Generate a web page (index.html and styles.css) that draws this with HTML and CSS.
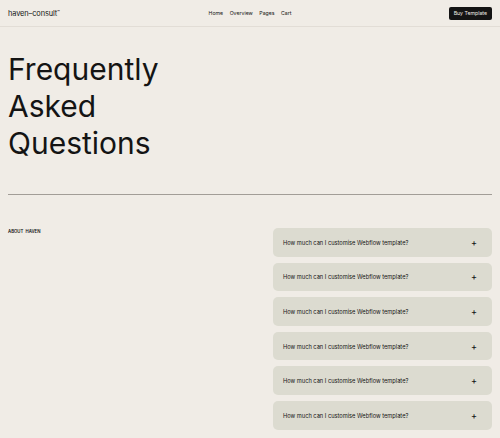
FILE: index.html
```html
<!DOCTYPE html>
<html>
<head>
<meta charset="utf-8">
<link rel="stylesheet" href="styles.css">
</head>
<body>
<header class="nav">
  <div class="logo">haven–consult<sup>™</sup></div>
  <nav class="links">
    <a>Home</a><a>Overview</a><a>Pages</a><a>Cart</a>
  </nav>
  <div class="nav-right"><a class="btn">Buy Template</a></div>
</header>
<main class="page">
  <h1 class="title">Frequently<br>Asked<br>Questions</h1>
  <hr class="rule">
  <section class="faq">
    <div class="label">About&nbsp; Haven</div>
    <div class="list">
      <div class="item"><span>How much can I customise Webflow template?</span><span class="plus">+</span></div>
      <div class="item"><span>How much can I customise Webflow template?</span><span class="plus">+</span></div>
      <div class="item"><span>How much can I customise Webflow template?</span><span class="plus">+</span></div>
      <div class="item"><span>How much can I customise Webflow template?</span><span class="plus">+</span></div>
      <div class="item"><span>How much can I customise Webflow template?</span><span class="plus">+</span></div>
      <div class="item"><span>How much can I customise Webflow template?</span><span class="plus">+</span></div>
    </div>
  </section>
</main>
</body>
</html>
```
FILE: styles.css
```css
html, body { margin: 0; padding: 0; }
body {
  background: #f0ece6;
  color: #141414;
  font-family: Inter, "Liberation Sans", sans-serif;
}
.nav {
  display: grid;
  grid-template-columns: 1fr auto 1fr;
  align-items: center;
  height: 26px;
  padding: 0 8px;
  border-bottom: 1px solid #e2ddd6;
}
.logo { font-size: 7.4px; letter-spacing: -0.1px; }
.logo sup { font-size: 4.5px; vertical-align: 2px; }
.links { display: flex; gap: 6.5px; font-size: 5.2px; }
.nav-right { display: flex; justify-content: flex-end; }
.btn {
  background: #141414;
  color: #f0ece6;
  font-size: 5.2px;
  padding: 3px 5px;
  border-radius: 2px;
  line-height: 7px;
}
.page { padding: 0 8px; }
.title {
  margin: 0;
  padding-top: 24px;
  font-weight: 400;
  font-size: 30px;
  line-height: 37px;
  letter-spacing: 0;
}
.rule {
  margin: 32px 0 0;
  border: 0;
  border-top: 1px solid #a29d97;
}
.faq {
  display: grid;
  grid-template-columns: 1fr 219px;
  margin-top: 33px;
}
.label {
  font-size: 4.3px;
  font-weight: 600;
  text-transform: uppercase;
  padding-top: 1px;
}
.list { display: flex; flex-direction: column; gap: 6px; }
.item {
  display: flex;
  justify-content: space-between;
  align-items: center;
  height: 28.6px;
  padding: 0 15px 0 10px;
  background: #dcdbd0;
  border-radius: 5px;
  font-size: 5.7px;
}
.plus { font-size: 9px; font-weight: 500; }
```
